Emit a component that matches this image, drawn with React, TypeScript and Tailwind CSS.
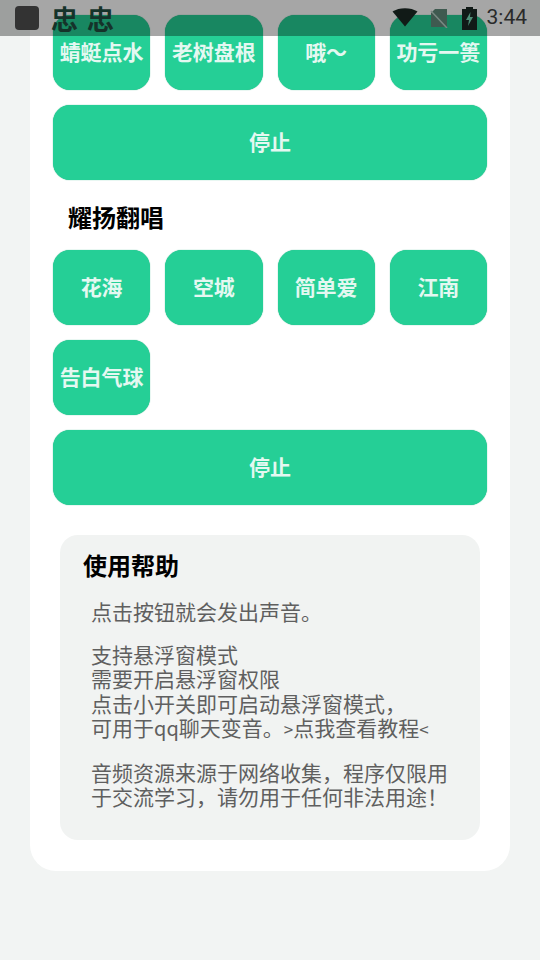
import { Fragment } from "react";

const cjk = "font-['Noto_Sans_CJK_SC','Noto_Sans',sans-serif]";

function SoundButton({ label }: { label: string }) {
  return (
    <button className="flex h-[75px] items-center justify-center rounded-[17px] bg-[#25cf96] pb-[2px] text-[21px] font-bold whitespace-nowrap text-[#e4f8f1] shadow-[0_0_1px_#1aa878]">
      {label}
    </button>
  );
}

function StopButton() {
  return (
    <button className="flex h-[75px] w-full items-center justify-center rounded-[17px] bg-[#25cf96] pb-[2px] text-[21px] font-bold text-[#e4f8f1] shadow-[0_0_1px_#1aa878]">
      停止
    </button>
  );
}

function SoundGrid({ labels }: { labels: string[] }) {
  return (
    <div className="grid grid-cols-4 gap-x-[15px] gap-y-[15px]">
      {labels.map((label) => (
        <Fragment key={label}>
          <SoundButton label={label} />
        </Fragment>
      ))}
    </div>
  );
}

function StatusBar() {
  return (
    <div className="absolute top-0 left-0 z-10 flex h-[36px] w-full items-center bg-black/35 pr-[13px] pl-[15px]">
      <div className="h-[24px] w-[24px] rounded-[4px] bg-[#333333]" />
      <span className="ml-[12px] text-[27px] leading-none font-bold text-[#15332a]">忠</span>
      <span className="ml-[9px] text-[27px] leading-none font-bold text-[#15332a]">忠</span>
      <div className="ml-auto flex items-center">
        <svg width="26" height="20" viewBox="0 0 26 20" className="mr-[12px]">
          <path d="M0.5 3.5 C7 -1 19 -1 25.5 3.5 L13 18.5 Z" fill="#111a17" />
        </svg>
        <svg width="18" height="20" viewBox="0 0 18 20" className="mr-[14px]">
          <path d="M5 1 H17 V19 H1 V5 Z" fill="#3f5a50" />
          <path d="M1 3 L17 20" stroke="#7a8a84" strokeWidth="1.5" />
        </svg>
        <svg width="15" height="24" viewBox="0 0 15 24" className="mr-[10px]">
          <path d="M4 1 H11 V3 H15 V24 H0 V3 H4 Z" fill="#111a17" />
          <path d="M8.5 6 L4 14 H7 L6 20 L11 11 H8 Z" fill="#4f8f78" />
        </svg>
        <span className="font-['Roboto',sans-serif] text-[21px] text-[#2a2a2a]">3:44</span>
      </div>
    </div>
  );
}

export default function App() {
  return (
    <div className={`relative h-[960px] w-[540px] overflow-hidden bg-[#f2f4f3] ${cjk}`}>
      <StatusBar />
      <div className="mx-[30px] h-[871px] rounded-b-[26px] bg-white px-[23px] pt-[15px]">
        <SoundGrid labels={["蜻蜓点水", "老树盘根", "哦～", "功亏一篑"]} />
        <div className="mt-[15px]">
          <StopButton />
        </div>
        <h2 className="mt-[21px] mb-[17px] pl-[15px] text-[24px] leading-[32px] font-bold text-black">耀扬翻唱</h2>
        <SoundGrid labels={["花海", "空城", "简单爱", "江南", "告白气球"]} />
        <div className="mt-[15px]">
          <StopButton />
        </div>
        <div className="mx-[7px] mt-[30px] h-[305px] rounded-[18px] bg-[#f1f3f2] pt-[14px] pl-[23px]">
          <h3 className="text-[24px] leading-[32px] font-bold text-black">使用帮助</h3>
          <div className="mt-[18px] pl-[8px] text-[21px] leading-[24.5px] text-[#5f5f5f]">
            <p>点击按钮就会发出声音。</p>
            <p className="mt-[18px]">
              支持悬浮窗模式
              <br />
              需要开启悬浮窗权限
              <br />
              点击小开关即可启动悬浮窗模式，
              <br />
              可用于<span className="text-[20px]">qq</span>聊天变音。
              <span className="text-[17px]">&gt;</span>点我查看教程<span className="text-[17px]">&lt;</span>
            </p>
            <p className="mt-[18px]">
              音频资源来源于网络收集，程序仅限用
              <br />
              于交流学习，请勿用于任何非法用途！
            </p>
          </div>
        </div>
      </div>
    </div>
  );
}
